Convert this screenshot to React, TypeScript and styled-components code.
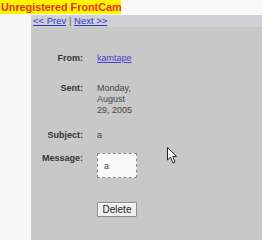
import styled, { createGlobalStyle } from "styled-components";

const GlobalStyle = createGlobalStyle`
  html, body {
    margin: 0;
    padding: 0;
    background: #f9f8f8;
    font-family: "Liberation Sans", Arial, sans-serif;
  }
`;

const Page = styled.div`
  width: 262px;
  height: 240px;
  display: flex;
  flex-direction: column;
  overflow: hidden;
  position: relative;
`;

const TopBar = styled.div`
  height: 15px;
  display: flex;
  background: #f9f8f8;
`;

const Banner = styled.div`
  width: 121px;
  height: 14px;
  background: #fff500;
  color: #e2301c;
  font-size: 10.8px;
  font-weight: bold;
  line-height: 14px;
  padding-left: 1px;
  box-sizing: border-box;
  white-space: nowrap;
`;

const Body = styled.div`
  flex: 1;
  display: flex;
`;

const LeftCol = styled.div`
  width: 31px;
  background: #f7f7f7;
`;

const Panel = styled.div`
  flex: 1;
  background: #c8c8c8;
  display: flex;
  flex-direction: column;
`;

const Nav = styled.div`
  height: 12px;
  padding: 0 2px;
  font-size: 9.5px;
  line-height: 12px;
  color: #555;
  background: #cfcfd6;
`;

const NavLink = styled.a`
  color: #3434c8;
  text-decoration: underline;
`;

const Row = styled.div<{ $top: number }>`
  display: grid;
  grid-template-columns: 52px 1fr;
  column-gap: 14px;
  margin-top: ${(p) => p.$top}px;
  font-size: 9px;
  line-height: 11px;
`;

const Label = styled.div`
  text-align: right;
  font-weight: bold;
  color: #333;
`;

const Value = styled.div`
  color: #444;
  width: 40px;
`;

const UserLink = styled.a`
  color: #4040c8;
  text-decoration: underline;
`;

const MessageBox = styled.div`
  width: 40px;
  height: 25px;
  box-sizing: border-box;
  border: 1px dashed #8a8a8a;
  background: #f8f8f8;
  padding: 7px 0 0 6px;
  color: #444;
`;

const DeleteButton = styled.button`
  width: 40px;
  height: 15px;
  padding: 0;
  font-family: "Liberation Sans", Arial, sans-serif;
  font-size: 10px;
  color: #222;
  background: #efefef;
  border: 1px solid #8c8c8c;
  border-radius: 1px;
  box-shadow: inset 1px 1px 0 #fff;
`;

const Cursor = styled.svg`
  position: absolute;
  left: 167px;
  top: 147px;
`;

const App = () => {
  return (
    <Page>
      <GlobalStyle />
      <TopBar>
        <Banner>Unregistered FrontCam</Banner>
      </TopBar>
      <Body>
        <LeftCol />
        <Panel>
          <Nav>
            <NavLink href="#">&lt;&lt; Prev</NavLink> | <NavLink href="#">Next &gt;&gt;</NavLink>
          </Nav>
          <Row $top={26}>
            <Label>From:</Label>
            <Value>
              <UserLink href="#">kamtape</UserLink>
            </Value>
          </Row>
          <Row $top={19}>
            <Label>Sent:</Label>
            <Value>Monday, August 29, 2005</Value>
          </Row>
          <Row $top={14}>
            <Label>Subject:</Label>
            <Value>a</Value>
          </Row>
          <Row $top={12}>
            <Label>Message:</Label>
            <MessageBox>a</MessageBox>
          </Row>
          <Row $top={24}>
            <div />
            <div>
              <DeleteButton>Delete</DeleteButton>
            </div>
          </Row>
        </Panel>
      </Body>
      <Cursor width="12" height="18" viewBox="0 0 12 18">
        <path
          d="M0.5 0.5 L0.5 13 L3.5 10.2 L6 16 L8 15 L5.6 9.4 L9.6 9.4 Z"
          fill="#fff"
          stroke="#222"
          strokeWidth="1"
          strokeLinejoin="miter"
        />
      </Cursor>
    </Page>
  );
};

export default App;
